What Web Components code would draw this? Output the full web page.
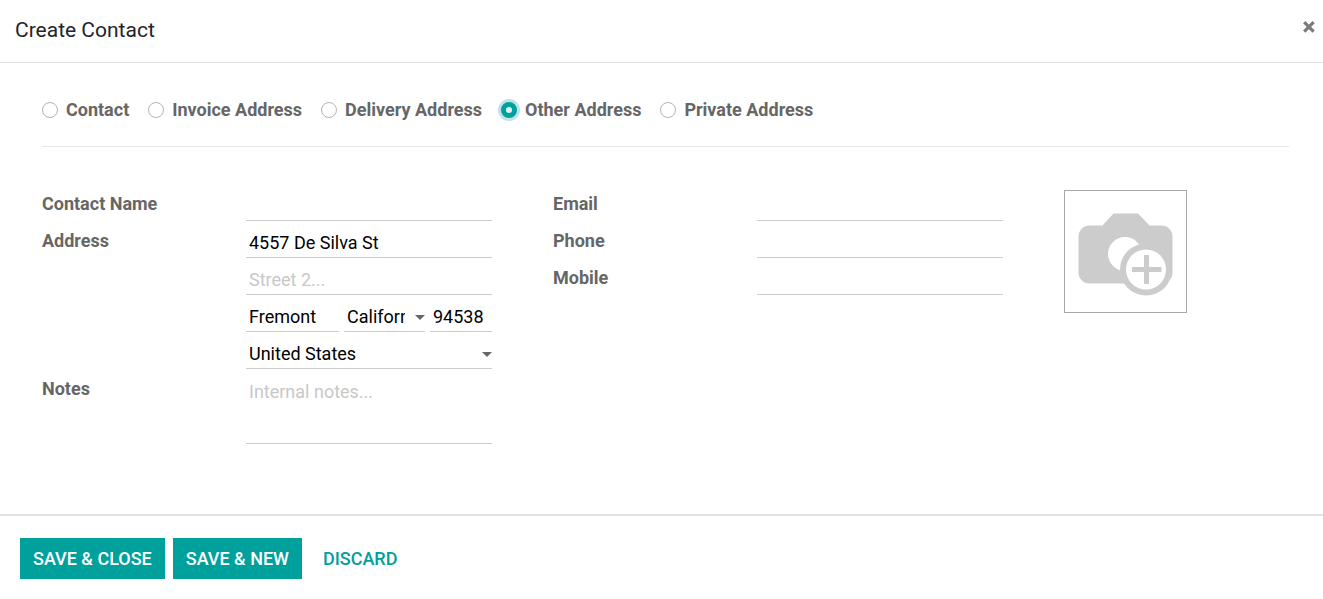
<!DOCTYPE html>
<html lang="en">
<head>
<meta charset="utf-8">
<meta name="viewport" content="width=device-width, initial-scale=1">
<title>Create Contact</title>
<style>
  body {
    margin: 0;
    background: #fff;
    font-family: Roboto, "Liberation Sans", sans-serif;
    font-size: 18px;
    line-height: 26px;
    color: #666;
  }
</style>
</head>
<body>

<modal-dialog heading="Create Contact">
  <address-type value="Other Address"></address-type>

  <form-columns>
    <form-group>
      <form-field label="Contact Name"></form-field>
      <address-field label="Address"></address-field>
      <form-field label="Notes" type="textarea" placeholder="Internal notes..."></form-field>
    </form-group>
    <form-group>
      <form-field label="Email" type="email"></form-field>
      <form-field label="Phone" type="tel"></form-field>
      <form-field label="Mobile" type="tel"></form-field>
    </form-group>
    <image-picker></image-picker>
  </form-columns>

  <action-button slot="footer" variant="primary">Save &amp; Close</action-button>
  <action-button slot="footer" variant="primary">Save &amp; New</action-button>
  <action-button slot="footer" variant="link">Discard</action-button>
</modal-dialog>

<script>
// styles shared by every element that holds form controls
const fieldStyles = `
  :host {
    display: block;
  }

  .row {
    display: grid;
    grid-template-columns: 204fr 246fr;
  }

  label {
    font-weight: 700;
    color: #666;
  }

  input, select, textarea {
    display: block;
    box-sizing: border-box;
    width: 100%;
    min-width: 0;
    height: 30px;
    margin: 0;
    padding: 0 3px;
    border: 0;
    border-bottom: 1px solid #ccc;
    border-radius: 0;
    outline: none;
    background-color: transparent;
    font: inherit;
    color: #000;
  }

  input:focus, select:focus, textarea:focus {
    border-color: #00a09d;
  }

  ::placeholder {
    color: #c8c8c8;
    opacity: 1;
  }

  textarea {
    height: 68px;
    padding-top: 3px;
    resize: none;
  }
`;

class ModalDialog extends HTMLElement {
  constructor() {
    super();
    this.attachShadow({ mode: "open" });
  }

  connectedCallback() {
    this.shadowRoot.innerHTML = `
      <style>
        :host {
          display: flex;
          flex-direction: column;
          min-height: 100vh;
        }

        header {
          display: flex;
          align-items: flex-start;
          justify-content: space-between;
          padding: 16px 8px 18px 15px;
          border-bottom: 1px solid #dee2e6;
        }

        h4 {
          margin: 0;
          font-size: 21px;
          font-weight: 400;
          line-height: 28px;
          color: #212529;
        }

        .close {
          display: block;
          margin-top: 4px;
          padding: 0;
          border: 0;
          background: none;
          cursor: pointer;
        }

        .close svg {
          display: block;
        }

        main {
          flex: 1;
          padding: 34px 34px 32px 42px;
        }

        footer {
          display: flex;
          flex-wrap: wrap;
          gap: 8px;
          padding: 22px 20px 20px;
          border-top: 2px solid #dee2e6;
        }
      </style>

      <header>
        <h4>${this.getAttribute("heading")}</h4>
        <button class="close" type="button" aria-label="Close">
          <svg width="13" height="13" viewBox="0 0 13 13">
            <path d="M2.200 2.200 L11.600 11.600 M11.600 2.200 L2.200 11.600" stroke="#7a7a7a" stroke-width="3.200" fill="none"/>
          </svg>
        </button>
      </header>
      <main><slot></slot></main>
      <footer><slot name="footer"></slot></footer>
    `;
  }
}

class AddressType extends HTMLElement {
  constructor() {
    super();
    this.attachShadow({ mode: "open" });

    this.options = [
      "Contact",
      "Invoice Address",
      "Delivery Address",
      "Other Address",
      "Private Address",
    ];
  }

  connectedCallback() {
    const selected = this.getAttribute("value");

    this.shadowRoot.innerHTML = `
      <style>
        :host {
          display: block;
          padding-bottom: 23px;
          border-bottom: 1px solid #e5e5e5;
        }

        div {
          display: flex;
          flex-wrap: wrap;
          column-gap: 19px;
        }

        label {
          display: flex;
          align-items: center;
          gap: 8px;
          font-weight: 700;
        }

        input {
          appearance: none;
          box-sizing: border-box;
          width: 16px;
          height: 16px;
          margin: 0;
          border: 1px solid #adb5bd;
          border-radius: 50%;
          background: #fff;
        }

        input:checked {
          border: 5px solid #00a09d;
          background: #e4eef0;
          background-clip: padding-box;
          box-shadow: 0 0 0 3px #c0e2e8;
        }
      </style>

      <div role="radiogroup" aria-label="Address type">
        ${this.options.map(o => `
          <label><input type="radio" name="type" value="${o}" ${o === selected ? "checked" : ""}>${o}</label>
        `).join("")}
      </div>
    `;
  }
}

class FormColumns extends HTMLElement {
  constructor() {
    super();
    this.attachShadow({ mode: "open" });
    this.shadowRoot.innerHTML = `
      <style>
        :host {
          display: grid;
          grid-template-columns: 450fr 450fr 225fr;
          column-gap: 61px;
          align-items: start;
          padding-top: 43px;
        }
      </style>
      <slot></slot>
    `;
  }
}

class FormGroup extends HTMLElement {
  constructor() {
    super();
    this.attachShadow({ mode: "open" });
    this.shadowRoot.innerHTML = `
      <style>
        :host {
          display: flex;
          flex-direction: column;
          gap: 7px;
          padding-top: 1px;
        }
      </style>
      <slot></slot>
    `;
  }
}

class FormField extends HTMLElement {
  constructor() {
    super();
    this.attachShadow({ mode: "open" });
  }

  connectedCallback() {
    const type = this.getAttribute("type") || "text";
    const placeholder = this.getAttribute("placeholder") || "";

    const control = type === "textarea"
      ? `<textarea id="control" placeholder="${placeholder}"></textarea>`
      : `<input id="control" type="${type}" placeholder="${placeholder}">`;

    this.shadowRoot.innerHTML = `
      <style>${fieldStyles}</style>
      <div class="row">
        <label for="control">${this.getAttribute("label")}</label>
        ${control}
      </div>
    `;
  }
}

class AddressField extends HTMLElement {
  constructor() {
    super();
    this.attachShadow({ mode: "open" });
  }

  connectedCallback() {
    this.shadowRoot.innerHTML = `
      <style>
        ${fieldStyles}

        .lines {
          display: grid;
          gap: 7px;
        }

        .city {
          display: grid;
          grid-template-columns: 93fr 81fr 62fr;
          gap: 5px;
        }

        .select {
          display: grid;
          align-items: center;
        }

        .select > * {
          grid-area: 1 / 1;
        }

        .select svg {
          justify-self: end;
          pointer-events: none;
        }

        select {
          appearance: none;
          padding-right: 20px;
        }
      </style>

      <div class="row">
        <label for="street">${this.getAttribute("label")}</label>
        <div class="lines">
          <input id="street" type="text" value="4557 De Silva St">
          <input type="text" placeholder="Street 2..." aria-label="Street 2">
          <div class="city">
            <input type="text" value="Fremont" aria-label="City">
            <div class="select">
              <select aria-label="State"><option>California</option></select>
              ${this.caret()}
            </div>
            <input type="text" value="94538" aria-label="ZIP">
          </div>
          <div class="select">
            <select aria-label="Country"><option>United States</option></select>
            ${this.caret()}
          </div>
        </div>
      </div>
    `;
  }

  caret() {
    return `<svg width="10" height="5" viewBox="0 0 10 5"><path d="M0 0h10L5 5z" fill="#666"/></svg>`;
  }
}

class ImagePicker extends HTMLElement {
  constructor() {
    super();
    this.attachShadow({ mode: "open" });
    this.shadowRoot.innerHTML = `
      <style>
        :host {
          display: block;
        }

        button {
          display: block;
          padding: 0;
          border: 1px solid #a8a8a8;
          background: #fff;
          cursor: pointer;
        }

        svg {
          display: block;
        }
      </style>

      <button type="button" aria-label="Upload image">
        <svg width="121" height="121" viewBox="0 0 121 121">
          <path fill="#ccc" d="M24.500 34.500h13l11-12h24.500l11.500 12h12a11 11 0 0 1 11 11v36a11 11 0 0 1-11 11h-72a11 11 0 0 1-11-11v-36a11 11 0 0 1 11-11z"/>
          <circle cx="60" cy="63" r="17" fill="#fff"/>
          <circle cx="81" cy="78.500" r="26" fill="#ccc"/>
          <circle cx="81" cy="78.500" r="20" fill="#fff"/>
          <path d="M67 78.500h29.500M81.500 64v29" stroke="#ccc" stroke-width="5" fill="none"/>
        </svg>
      </button>
    `;
  }
}

class ActionButton extends HTMLElement {
  constructor() {
    super();
    this.attachShadow({ mode: "open" });
    this.shadowRoot.innerHTML = `
      <style>
        :host {
          display: block;
        }

        button {
          display: block;
          height: 41px;
          padding: 0 12px;
          border: 1px solid transparent;
          background: none;
          font: inherit;
          font-weight: 500;
          text-transform: uppercase;
          color: #00a09d;
          cursor: pointer;
        }

        :host([variant="primary"]) button {
          border-color: #00a09d;
          background: #00a09d;
          color: #fff;
        }
      </style>
      <button type="button"><slot></slot></button>
    `;
  }
}

customElements.define("modal-dialog", ModalDialog);
customElements.define("address-type", AddressType);
customElements.define("form-columns", FormColumns);
customElements.define("form-group", FormGroup);
customElements.define("form-field", FormField);
customElements.define("address-field", AddressField);
customElements.define("image-picker", ImagePicker);
customElements.define("action-button", ActionButton);
</script>
</body>
</html>
